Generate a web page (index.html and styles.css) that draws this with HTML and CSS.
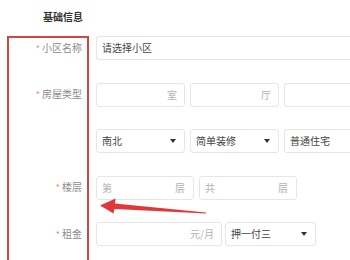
FILE: index.html
```html
<!DOCTYPE html>
<html lang="zh">
<head>
<meta charset="utf-8">
<link rel="stylesheet" href="styles.css">
</head>
<body>
<div class="page">
  <div class="title">基础信息</div>
  <div class="form">
    <div class="row">
      <div class="label"><span class="req">*</span>小区名称</div>
      <div class="fields">
        <div class="box w-full open"><span class="val">请选择小区</span></div>
      </div>
    </div>
    <div class="row">
      <div class="label"><span class="req">*</span>房屋类型</div>
      <div class="fields gap5">
        <div class="box w89 end"><span class="ph">室</span></div>
        <div class="box w89 end"><span class="ph">厅</span></div>
        <div class="box grow open"></div>
      </div>
    </div>
    <div class="row">
      <div class="label"></div>
      <div class="fields gap5">
        <div class="box w89 sel"><span class="val">南北</span><span class="caret"></span></div>
        <div class="box w89 sel"><span class="val">简单装修</span><span class="caret"></span></div>
        <div class="box grow open"><span class="val">普通住宅</span></div>
      </div>
    </div>
    <div class="row">
      <div class="label"><span class="req">*</span>楼层</div>
      <div class="fields gap5">
        <div class="box w98 sel"><span class="ph">第</span><span class="ph">层</span></div>
        <div class="box w98 sel"><span class="ph">共</span><span class="ph">层</span></div>
      </div>
    </div>
    <div class="row">
      <div class="label"><span class="req">*</span>租金</div>
      <div class="fields gap3">
        <div class="box w126 end"><span class="ph">元/月</span></div>
        <div class="box w91 sel"><span class="val">押一付三</span><span class="caret"></span></div>
      </div>
    </div>
  </div>
  <div class="highlight"></div>
  <svg class="arrow" width="350" height="260" viewBox="0 0 350 260">
    <polygon points="100,205.5 115.5,198.5 115,203.5 206,212.5 206,213.5 114.5,209 113.5,213.5" fill="#e2383a"/>
  </svg>
</div>
</body>
</html>
```
FILE: styles.css
```css
html, body {
  margin: 0;
  padding: 0;
  overflow: hidden;
  background: #ffffff;
}
.page {
  position: relative;
  width: 350px;
  height: 260px;
  overflow: hidden;
  font-family: "Noto Sans CJK SC", "Noto Sans", sans-serif;
  font-size: 10px;
}
.title {
  padding: 11px 0 0 43px;
  height: 14px;
  line-height: 12px;
  font-weight: bold;
  color: #333;
  margin-bottom: 11px;
}
.form {
  display: flex;
  flex-direction: column;
  gap: 22.5px;
}
.row {
  display: flex;
  align-items: center;
  height: 24px;
}
.label {
  width: 82px;
  flex: none;
  text-align: right;
  color: #8c8c8c;
  margin-right: 14px;
  white-space: nowrap;
  line-height: 12px;
}
.req {
  color: #f08a8a;
  margin-right: 2px;
  font-size: 9px;
}
.fields {
  display: flex;
  height: 100%;
  flex: 1;
  min-width: 0;
}
.gap5 { gap: 5px; }
.gap3 { gap: 3px; }
.box {
  box-sizing: border-box;
  height: 100%;
  border: 1px solid #e6e6e6;
  border-radius: 3px;
  display: flex;
  align-items: center;
  padding: 0 6px 0 5px;
  flex: none;
  line-height: 12px;
}
.open {
  border-right: none;
  border-top-right-radius: 0;
  border-bottom-right-radius: 0;
}
.w-full { flex: 1; }
.grow { flex: 1; }
.w89 { width: 89px; }
.w98 { width: 98px; }
.w126 { width: 126px; }
.w91 { width: 91px; }
.end { justify-content: flex-end; padding-right: 7px; }
.sel { justify-content: space-between; padding-right: 8px; }
.val { color: #444; }
.ph { color: #b3b3b3; }
.caret {
  width: 0;
  height: 0;
  border-left: 3px solid transparent;
  border-right: 3px solid transparent;
  border-top: 4px solid #333;
}
.highlight {
  position: absolute;
  left: 7px;
  top: 36px;
  width: 78px;
  height: 224px;
  box-sizing: border-box;
  width: 82px;
  border: 2px solid #d0473d;
  border-bottom: none;
}
.arrow {
  position: absolute;
  left: 0;
  top: 0;
}
```
